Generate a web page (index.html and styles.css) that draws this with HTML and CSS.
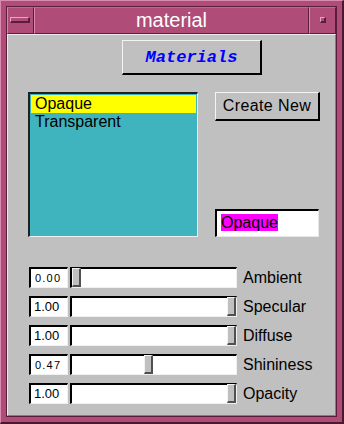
FILE: index.html
```html
<!DOCTYPE html>
<html lang="en">
<head>
    <meta charset="UTF-8">
    <title>material</title>
    <link rel="stylesheet" href="styles.css">
</head>
<body>
    <div class="window">
        <div class="frame">
            <div class="titlebar">
                <div class="tb-cell tb-btn"><span class="min-icon"></span></div>
                <div class="tb-cell tb-title">material</div>
                <div class="tb-cell tb-btn"><span class="menu-icon"></span></div>
            </div>

            <div class="content">
                <button class="materials-btn">Materials</button>

                <div class="mid">
                    <div class="list">
                        <div class="list-item selected">Opaque</div>
                        <div class="list-item">Transparent</div>
                    </div>
                    <div class="side">
                        <button class="create-btn">Create New</button>
                        <div class="name-field"><span class="sel">Opaque</span></div>
                    </div>
                </div>

                <div class="sliders">
                    <div class="slider-row">
                        <div class="value small">0.00</div>
                        <div class="trough"><div class="thumb" style="left: 0px"></div></div>
                        <div class="label">Ambient</div>
                    </div>
                    <div class="slider-row">
                        <div class="value">1.00</div>
                        <div class="trough"><div class="thumb" style="left: 155px"></div></div>
                        <div class="label">Specular</div>
                    </div>
                    <div class="slider-row">
                        <div class="value">1.00</div>
                        <div class="trough"><div class="thumb" style="left: 155px"></div></div>
                        <div class="label">Diffuse</div>
                    </div>
                    <div class="slider-row">
                        <div class="value small">0.47</div>
                        <div class="trough"><div class="thumb" style="left: 72px"></div></div>
                        <div class="label">Shininess</div>
                    </div>
                    <div class="slider-row">
                        <div class="value">1.00</div>
                        <div class="trough"><div class="thumb" style="left: 155px"></div></div>
                        <div class="label">Opacity</div>
                    </div>
                </div>
            </div>
        </div>
    </div>
</body>
</html>
```

FILE: styles.css
```css
* {
    box-sizing: border-box;
}

body {
    margin: 0;
    padding: 0;
    background: #b04c78;
    font-family: 'Liberation Sans', Arial, sans-serif;
}

.window {
    width: 344px;
    height: 424px;
    background: #b04c78;
    border-style: solid;
    border-width: 1px 2px 2px 1px;
    border-color: #d88cb0 #4c1830 #4c1830 #d88cb0;
    padding: 5px;
}

.frame {
    height: 100%;
    display: flex;
    flex-direction: column;
    border: 1px solid #5a1e3c;
}

.titlebar {
    height: 27px;
    display: flex;
}

.tb-cell {
    height: 100%;
    border-style: solid;
    border-width: 1px;
    border-color: #c46690 #5a1e3c #5a1e3c #d888ae;
    background: #b04c78;
}

.tb-btn {
    width: 27px;
    position: relative;
}

.tb-title {
    flex: 1;
    color: #fff;
    font-size: 20px;
    line-height: 24px;
    text-align: center;
}

.min-icon {
    position: absolute;
    left: 2px;
    top: 9px;
    width: 20px;
    height: 6px;
    border-style: solid;
    border-width: 1px 2px 2px 1px;
    border-color: #e8a4c4 #5a1e3c #5a1e3c #e8a4c4;
}

.menu-icon {
    position: absolute;
    left: 10px;
    top: 9px;
    width: 6px;
    height: 6px;
    border-style: solid;
    border-width: 1px 2px 2px 1px;
    border-color: #e8a4c4 #5a1e3c #5a1e3c #e8a4c4;
}

.content {
    flex: 1;
    background: #c0c0c0;
    border-style: solid;
    border-width: 1px;
    border-color: #ececec #808080 #808080 #ececec;
    padding: 5px 0 0 20px;
    display: flex;
    flex-direction: column;
    align-items: flex-start;
}

.materials-btn {
    margin-left: 94px;
    width: 140px;
    height: 35px;
    padding: 0;
    background: #c0c0c0;
    border-style: solid;
    border-width: 1px 2px 2px 1px;
    border-color: #f4f4f4 #000 #000 #f4f4f4;
    color: #0000ff;
    font-family: 'Liberation Mono', 'Courier New', monospace;
    font-weight: bold;
    font-style: italic;
    font-size: 17px;
}

.mid {
    margin-top: 17px;
    display: flex;
    gap: 17px;
}

.list {
    width: 170px;
    height: 145px;
    background: #40b4be;
    border-style: solid;
    border-width: 2px 1px 1px 2px;
    border-color: #202020 #f0f0f0 #f0f0f0 #202020;
    padding: 1px 1px;
}

.list-item {
    height: 18px;
    line-height: 18px;
    padding-left: 4px;
    font-size: 16px;
    color: #000;
}

.list-item.selected {
    background: #ffff00;
}

.side {
    width: 105px;
    display: flex;
    flex-direction: column;
    justify-content: space-between;
}

.create-btn {
    width: 105px;
    height: 29px;
    padding: 0;
    background: #c0c0c0;
    border-style: solid;
    border-width: 1px 2px 2px 1px;
    border-color: #f4f4f4 #000 #000 #f4f4f4;
    color: #000;
    font-family: 'Liberation Sans', Arial, sans-serif;
    font-size: 16px;
    letter-spacing: 0.4px;
}

.name-field {
    width: 104px;
    height: 28px;
    background: #fff;
    border-style: solid;
    border-width: 2px 1px 1px 2px;
    border-color: #000 #e8e8e8 #e8e8e8 #000;
    padding: 2px 0 0 4px;
    font-size: 16px;
    line-height: 19px;
}

.sel {
    background: #ff00ff;
    color: #000;
}

.sliders {
    margin-top: 30px;
    margin-left: 1px;
    display: flex;
    flex-direction: column;
    gap: 8px;
}

.slider-row {
    height: 21px;
    display: flex;
    align-items: center;
}

.value {
    width: 39px;
    height: 21px;
    background: #fff;
    border-style: solid;
    border-width: 2px 1px 1px 2px;
    border-color: #000 #f0f0f0 #f0f0f0 #000;
    padding-left: 3px;
    font-size: 13px;
    line-height: 18px;
    color: #000;
}

.value.small {
    font-size: 11px;
    letter-spacing: 1.2px;
    padding-left: 4px;
}

.trough {
    position: relative;
    margin-left: 2px;
    width: 167px;
    height: 21px;
    background: #fff;
    border-style: solid;
    border-width: 2px 1px 1px 2px;
    border-color: #000 #f0f0f0 #f0f0f0 #000;
}

.thumb {
    position: absolute;
    top: -1px;
    width: 9px;
    height: 19px;
    background: #c0c0c0;
    border-style: solid;
    border-width: 1px 2px 2px 1px;
    border-color: #f4f4f4 #505050 #505050 #f4f4f4;
}

.label {
    margin-left: 6px;
    font-size: 16px;
    color: #000;
}
```
